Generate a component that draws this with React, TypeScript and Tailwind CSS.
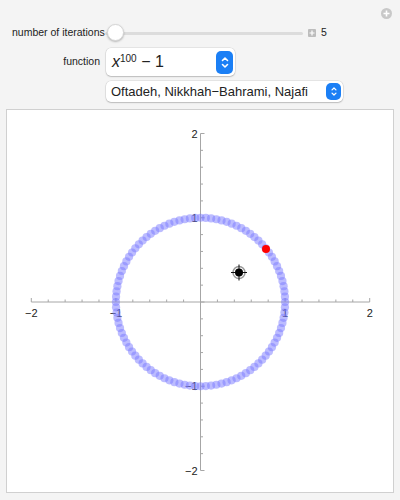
import React from 'react'

const OX = 200.5
const OY = 300
const UX = 84.6
const UY = 84.25

const px = (x: number) => OX + x * UX
const py = (y: number) => OY - y * UY

function Stepper({ w, h }: { w: number; h: number }) {
  return (
    <span
      className="flex shrink-0 items-center justify-center rounded-[5px] bg-[#1b7ff5]"
      style={{ width: w, height: h }}
    >
      <svg width="8" height={h - 6} viewBox="0 0 8 14" fill="none" stroke="white" strokeWidth="1.6" strokeLinecap="round" strokeLinejoin="round">
        <path d="M1.5 5 L4 2.5 L6.5 5" />
        <path d="M1.5 9 L4 11.5 L6.5 9" />
      </svg>
    </span>
  )
}

function Plot() {
  const dots = Array.from({ length: 100 }, (_, k) => {
    const a = (2 * Math.PI * k) / 100
    return { x: px(Math.cos(a)), y: py(Math.sin(a)) }
  })
  const minor = Array.from({ length: 21 }, (_, i) => -2 + i * 0.2)
  return (
    <svg width="386" height="382" viewBox="7 108 386 382" className="block">
      <rect x="7" y="108" width="386" height="382" fill="white" />
      {/* axes */}
      <line x1={px(-2)} y1={OY} x2={px(2)} y2={OY} stroke="#a6a6a6" strokeWidth="1" />
      <line x1={OX} y1={py(2)} x2={OX} y2={py(-2)} stroke="#a6a6a6" strokeWidth="1" />
      {minor.map((v, i) => {
        const major = Math.abs(v - Math.round(v)) < 1e-6
        const len = major ? 4 : 2.5
        return (
          <g key={i}>
            <line x1={px(v)} y1={OY} x2={px(v)} y2={OY - len} stroke="#a6a6a6" strokeWidth="1" />
            <line x1={OX} y1={py(v)} x2={OX + len} y2={py(v)} stroke="#a6a6a6" strokeWidth="1" />
          </g>
        )
      })}
      {/* labels */}
      <g fontFamily="'Liberation Sans', Arial, sans-serif" fontSize="11" fill="#222">
        <text x={px(-2)} y={OY + 15} textAnchor="middle">−2</text>
        <text x={px(-1)} y={OY + 15} textAnchor="middle">−1</text>
        <text x={px(1)} y={OY + 15} textAnchor="middle">1</text>
        <text x={px(2)} y={OY + 15} textAnchor="middle">2</text>
        <text x={OX - 3} y={py(2) + 4} textAnchor="end">2</text>
        <text x={OX - 3} y={py(1) + 4} textAnchor="end">1</text>
        <text x={OX - 3} y={py(-1) + 4} textAnchor="end">−1</text>
        <text x={OX - 3} y={py(-2) + 4} textAnchor="end">−2</text>
      </g>
      {dots.map((d, i) => (
        <circle key={i} cx={d.x} cy={d.y} r="4.1" fill="#7a7aff" fillOpacity="0.5" />
      ))}
      <circle cx="266" cy="247" r="4" fill="#ff0000" />
      {/* locator */}
      <g>
        <circle cx="239" cy="270.5" r="6" fill="none" stroke="#9a9a9a" strokeWidth="1.5" />
        <line x1="231" y1="270.5" x2="247" y2="270.5" stroke="#111" strokeWidth="1" />
        <line x1="239" y1="262.5" x2="239" y2="278.5" stroke="#111" strokeWidth="1" />
        <circle cx="239" cy="270.5" r="4" fill="#000" />
      </g>
    </svg>
  )
}

export default function App() {
  return (
    <div
      className="relative h-[500px] w-[400px] overflow-hidden bg-[#f4f4f4] text-[#222]"
      style={{ fontFamily: "'Liberation Sans', Arial, sans-serif" }}
    >
      <span className="absolute right-[8px] top-[8px] flex size-[11px] items-center justify-center rounded-full bg-[#c8c8c8]">
        <svg width="7" height="7" viewBox="0 0 7 7" stroke="white" strokeWidth="1.6">
          <path d="M3.5 0.5 V6.5 M0.5 3.5 H6.5" />
        </svg>
      </span>

      <div className="flex flex-col pt-[24px]">
        {/* slider row */}
        <div className="flex h-[18px] items-center">
          <span className="ml-[12px] w-[93px] text-[10.5px]">number of iterations</span>
          <div className="relative flex h-[18px] w-[198px] items-center">
            <div className="h-[3px] w-full rounded-full bg-[#dcdcdc]" />
            <span className="absolute left-[2px] top-0 size-[17px] rounded-full border border-[#d6d6d6] bg-white shadow-[0_1px_2px_rgba(0,0,0,0.25)]" />
          </div>
          <span className="ml-[5px] flex size-[8px] items-center justify-center rounded-[1px] bg-[#bdbdbd]">
            <svg width="6" height="6" viewBox="0 0 6 6" stroke="white" strokeWidth="1.2">
              <path d="M3 0.5 V5.5 M0.5 3 H5.5" />
            </svg>
          </span>
          <span className="ml-[5px] text-[10.5px]">5</span>
        </div>

        {/* function row */}
        <div className="mt-[6px] flex items-center">
          <span className="w-[100px] text-right text-[10.5px]">function</span>
          <div className="ml-[6px] flex h-[28px] w-[129px] items-center justify-between rounded-[5px] bg-white pl-[6px] pr-[2px] shadow-[0_0_0_0.5px_rgba(0,0,0,0.12),0_1px_1.5px_rgba(0,0,0,0.18)]">
            <span className="text-[16px] leading-none">
              <span className="italic">x</span>
              <sup className="text-[10px]">100</sup>
              <span> − 1</span>
            </span>
            <Stepper w={17} h={23} />
          </div>
        </div>

        {/* method row */}
        <div className="mt-[5px] flex">
          <div className="ml-[106px] flex h-[21px] w-[237px] items-center justify-between rounded-[5px] bg-white pl-[5px] pr-[2px] shadow-[0_0_0_0.5px_rgba(0,0,0,0.12),0_1px_1.5px_rgba(0,0,0,0.18)]">
            <span className="whitespace-nowrap text-[13px] leading-none">Oftadeh, Nikkhah−Bahrami, Najafi</span>
            <Stepper w={15} h={17} />
          </div>
        </div>

        {/* plot panel */}
        <div className="ml-[6px] mt-[7px] w-[388px] border border-[#d0d0d0]">
          <Plot />
        </div>
      </div>
    </div>
  )
}
